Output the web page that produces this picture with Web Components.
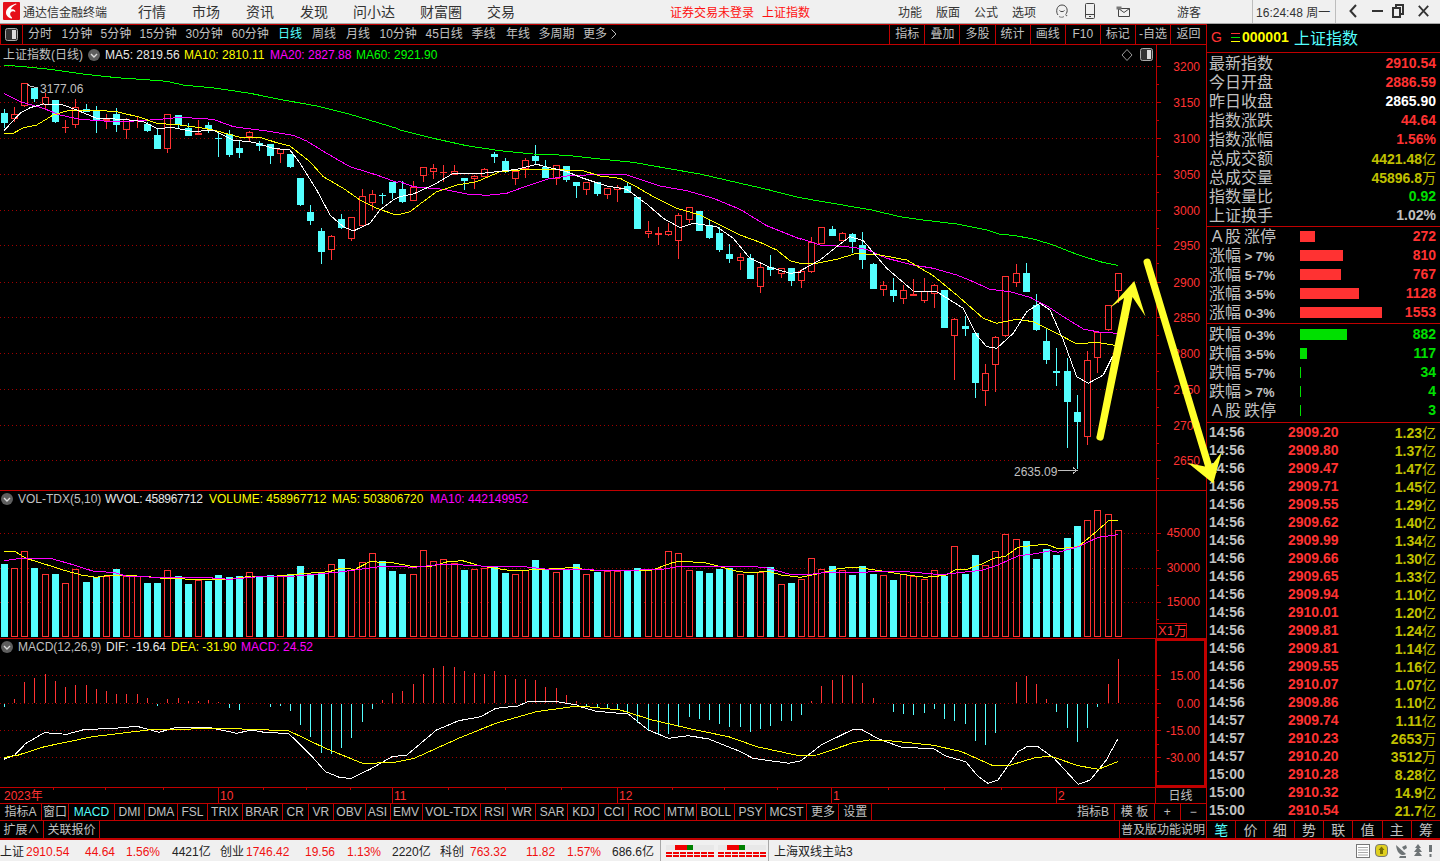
<!DOCTYPE html>
<html lang="zh">
<head>
<meta charset="utf-8">
<title>通达信金融终端</title>
<style>
  html,body{margin:0;padding:0;background:#000;height:861px;overflow:hidden;}
  body{display:flex;flex-direction:column;position:relative;width:1440px;
    font:12px "Liberation Sans","Noto Sans CJK SC",sans-serif;}
</style>
</head>
<body>
<tdx-titlebar></tdx-titlebar>
<tdx-workspace>
  <tdx-periodbar></tdx-periodbar>
  <tdx-kline></tdx-kline>
  <tdx-volume></tdx-volume>
  <tdx-macd></tdx-macd>
  <tdx-timeaxis></tdx-timeaxis>
  <tdx-indicatorbar></tdx-indicatorbar>
  <tdx-quote slot="side"></tdx-quote>
</tdx-workspace>
<tdx-statusbar></tdx-statusbar>
<tdx-arrows></tdx-arrows>

<script>
/* ---------- palette + chart data (page px, read off the reference) ---------- */
const RED = '#ff3232', CYAN = '#54ffff', GRID = '#a00000', LINE = '#c00000', GREY = '#c0c0c0';
const FONT = '"Liberation Sans","Noto Sans CJK SC",sans-serif';

// candle rows: type(r/c), bodyTop, bodyBottom, wickTop, wickBottom, in zoom units (3x) from an origin y
const group = (oy, rows) => rows.map(([t, a, b, c, d]) => ({ t, top: oy + a / 3, bot: oy + b / 3, hi: oy + c / 3, lo: oy + d / 3 }));
const CANDLES = [
  ...group(60, [['c',158,188,147,203],['r',163,178,142,185],['r',70,137,68,140],['c',84,116,84,125],['r',110,134,100,150],
    ['c',120,186,120,190],['r',200,203,180,220],['r',142,194,117,204],['c',148,155,132,157],['c',152,180,138,218],
    ['r',178,184,162,207],['c',162,194,145,215],['r',178,211,175,236],['r',181,184,168,203],['c',191,212,185,215],
    ['c',225,266,205,266],['r',163,266,163,278],['c',166,196,166,204],['c',204,227,190,227],['r',218,226,180,226],
    ['c',196,207,186,218],['c',235,238,215,290],['c',222,285,210,290],['c',264,278,243,293],['r',217,231,213,246],
    ['c',250,257,243,272],['c',252,287,252,311],['r',268,283,268,309],['c',282,320,282,323],['c',354,434,354,437],
    ['c',456,483,435,494],['c',513,575,504,611],['r',529,569,526,599],['c',477,503,462,507],['r',472,536,472,542],
    ['r',409,497,388,500],['r',403,428,390,450],['c',404,406,399,432],['c',366,398,366,418]]),
  ...group(130, [['c',177,216,153,218],['r',171,212,153,212],['r',112,137,112,155],['r',115,125,102,147],['r',127,130,105,155],
    ['r',124,136,105,136],['c',144,152,144,179],['r',139,146,135,177],['r',118,140,115,140],['c',72,80,67,99],
    ['c',93,127,85,130],['r',122,146,122,165],['r',91,116,85,144],['c',78,93,45,103],['c',110,143,90,143],
    ['r',106,147,106,165],['c',108,150,108,156],['c',156,168,156,204],['r',157,179,157,195],['c',155,192,155,198],
    ['r',175,194,175,207],['r',170,181,166,216],['c',167,189,155,189],['c',201,297,201,297],['r',304,311,273,324],
    ['r',310,314,292,345],['r',304,314,280,318],['r',256,332,250,387],['r',232,269,232,280],['c',243,302,243,302],
    ['c',284,324,270,327],['c',309,360,292,366],['c',372,387,343,399],['r',381,392,369,420],['c',385,446,372,446],
    ['r',411,470,402,489],['c',411,419,375,438],['r',413,431,413,444],['c',414,453,414,468]]),
  ...group(210, [['r',182,212,178,233],['r',95,185,82,190],['r',52,103,52,103],['c',58,78,48,78],['r',68,92,65,92],
    ['c',73,96,70,130],['c',105,150,67,177],['c',162,237,160,237],['r',226,241,213,258],['c',240,258,205,275],
    ['r',241,268,225,281],['r',251,257,207,257],['r',242,272,205,278],['r',226,253,223,293],['c',240,353,240,353],
    ['r',328,379,325,510],['c',348,356,318,378],['c',369,518,369,563],['r',490,542,462,587],['r',382,466,378,545],
    ['r',199,377,199,380],['r',190,218,162,230],['c',189,245,159,245],['c',285,360,252,362],['c',393,449,355,461],
    ['c',484,488,414,527],['c',484,575,445,713],['c',606,635,555,778],['r',451,682,424,705],['r',365,445,365,489],
    ['r',286,359,286,364],['r',190,242,190,280]])
];
const barX = (i) => Math.floor(4.33 + i * 10.22);

// volume bar tops and macd bar tips, zoom units from y=490
const VOL_TOPS = [222,235,184,234,253,252,280,238,276,262,257,237,259,258,279,279,241,258,282,270,273,255,261,258,247,262,256,258,252,228,
  252,252,223,207,240,217,190,214,243,252,253,181,214,208,220,240,238,235,231,249,253,240,210,236,247,238,222,
  253,246,244,242,240,234,236,235,184,190,241,243,249,237,234,253,255,247,231,281,279,268,205,238,228,241,255,228,252,256,270,253,259,268,241,258,169,
  252,195,226,184,133,148,153,207,177,195,144,108,91,61,72,121];
const MACD_TIPS = [648,627,576,564,552,573,591,585,585,597,603,612,612,612,624,644,627,624,633,633,630,636,651,657,640,640,648,645,660,702,738,786,789,771,741,693,654,
  630,609,603,582,552,534,528,531,543,549,552,543,556,567,567,570,591,594,615,633,
  648,652,654,657,663,696,718,729,729,706,678,684,687,699,708,708,723,714,705,690,690,672,633,588,570,555,556,579,624,640,663,669,672,666,654,684,690,699,750,762,726,640,
  576,558,582,627,663,711,753,711,648,582,507];

// polylines stitched from the crops: [origin x, origin y, x scale, flat points]
const poly = (...parts) => parts.flatMap(([ox, oy, sx, p]) => {
  const out = [];
  for (let i = 0; i < p.length; i += 2) out.push((ox + p[i] / sx).toFixed(1) + ',' + (oy + p[i + 1] / 3).toFixed(1));
  return out;
}).join(' ');
const SX9 = 1568 / 580, SX10 = 1568 / 630;

const MA60 = poly([0,60,3,[12,16,60,19,150,28,250,42,350,53,450,60,500,64,550,75,650,85,750,100,850,120,950,138,1050,163,1190,205]],
  [400,130,3,[0,0,20,5,100,25,200,47,300,62,400,72,500,76,600,87,700,97,800,115,900,132,1000,155,1100,178,1200,203]],
  [800,210,3,[215,0,300,20,370,30,470,42,560,60,600,73,640,76,700,87,760,105,830,133,900,155,953,166]]);
const MA20 = poly([0,60,3,[12,100,60,125,130,145,180,165,240,178,300,182,350,186,420,182,480,178,540,172,640,178,700,200,800,213,880,226,920,243,980,280,1050,320,1130,345,1190,367]],
  [400,130,3,[0,155,40,170,130,178,200,192,260,196,320,190,380,168,440,148,500,138,600,133,680,135,780,168,860,182,940,205,1020,238,1100,287,1200,327]],
  [800,210,3,[0,85,60,105,140,110,200,118,260,145,340,165,400,175,470,195,520,215,570,238,630,245,690,262,740,287,790,320,850,357,900,367,955,370]]);
const MA10 = poly([0,60,3,[12,220,40,220,70,203,110,195,160,165,210,150,280,150,350,155,420,172,470,190,540,195,600,203,640,210,720,232,780,232,830,248,870,258,930,305,970,350,1030,385,1080,420,1130,445,1180,462,1195,463]],
  [400,130,3,[0,253,30,245,60,222,110,185,170,165,230,155,300,125,360,120,440,118,550,122,600,138,660,145,700,165,760,200,830,235,900,255,960,285,1020,315,1080,337,1130,360,1170,392,1200,400]],
  [800,210,3,[0,162,50,160,110,148,170,130,240,135,320,150,400,197,470,255,550,325,590,340,650,328,700,335,780,375,830,402,890,397,950,407]]);
const MA5 = poly([0,60,3,[12,212,60,160,90,143,130,132,190,135,230,150,290,175,370,178,430,185,470,205,520,203,580,215,640,210,700,240,760,247,820,265,870,270,900,310,950,390,990,465,1030,500,1060,513,1110,490,1140,450,1180,420,1195,412]],
  [400,130,3,[0,200,40,192,100,165,160,130,230,132,290,125,350,118,410,103,450,113,500,125,550,145,620,168,680,178,740,222,790,265,840,293,880,280,950,290,1000,325,1050,385,1110,412,1170,430,1200,427]],
  [800,210,3,[0,183,60,150,110,110,150,80,190,92,260,175,340,243,410,245,490,295,530,375,560,410,590,415,640,370,680,305,720,280,750,300,790,390,830,500,865,520,910,495,950,415]]);

const VOL_MA5 = poly([0,490,SX9,[10,184,40,184,70,205,120,222,170,240,220,255,260,262,300,255,330,255,400,260,440,265,500,267,560,267,620,268,680,258,750,258,830,250,890,245,920,235,960,238,1000,215,1060,218,1120,230,1170,228,1210,215,1250,212,1300,228,1370,240,1430,240,1470,238,1560,232]],
  [580,490,SX10,[0,236,30,241,100,240,180,240,230,218,250,214,310,218,340,227,390,244,420,248,470,244,500,255,550,262,590,252,640,237,680,231,740,241,800,253,860,262,910,256,935,239,965,237,1000,222,1030,205,1060,198,1090,172,1130,166,1160,163,1190,176,1240,170,1280,130,1315,93,1338,92]]);
const VOL_MA10 = poly([0,490,SX9,[10,212,50,206,140,206,200,225,250,243,310,248,340,258,420,262,550,262,620,268,700,260,800,258,900,248,960,240,1040,228,1120,232,1200,222,1300,228,1400,228,1480,238,1560,238]],
  [580,490,SX10,[0,238,50,241,130,241,210,237,250,229,400,229,460,232,520,252,560,255,600,249,800,244,900,254,950,247,1000,241,1040,225,1090,198,1140,190,1170,182,1190,187,1240,170,1290,142,1338,134]]);

const DIF = poly([0,490,SX9,[10,808,40,795,70,760,120,728,180,733,230,718,300,716,370,709,430,727,470,714,560,711,640,730,680,720,720,728,780,730,840,795,880,845,920,863,950,865,1000,838,1060,800,1100,795,1180,720,1240,692,1300,680,1340,655,1400,648,1430,634,1500,634,1560,645]],
  [580,490,SX10,[0,650,40,664,120,672,170,720,220,745,270,737,320,747,400,785,430,805,520,820,550,812,600,765,680,718,700,718,740,745,800,772,880,776,910,798,960,815,990,858,1015,880,1040,870,1090,785,1115,768,1140,770,1180,805,1240,883,1270,870,1310,810,1338,748]]);
const DEA = poly([0,490,SX9,[10,803,50,795,120,770,250,740,400,720,600,715,780,722,880,775,980,820,1060,818,1120,805,1240,745,1340,700,1450,665,1560,648]],
  [580,490,SX10,[0,648,100,660,180,690,280,718,370,740,440,770,540,796,590,795,680,758,720,750,770,752,880,766,950,785,1030,828,1070,826,1130,804,1170,798,1240,827,1290,838,1338,815]]);

/* ---------- svg bits ---------- */
const dotted = (y) => `<line x1="0" x2="1156" y1="${y + .5}" y2="${y + .5}" stroke="${GRID}" stroke-dasharray="1 3"/>`;
const rect = (x, y, w, h, fill) => `<rect x="${x}" y="${y}" width="${w}" height="${h}" fill="${fill}"/>`;
const outline = (x, y, w, h, c) => `<rect x="${x + .5}" y="${y + .5}" width="${w - 1}" height="${h - 1}" fill="#000" stroke="${c}"/>`;
const line = (pts, c) => `<polyline points="${pts}" fill="none" stroke="${c}"/>`;
const tick = (y, long) => rect(1156, y, long ? 5 : 3, 1, LINE);
const axisLabel = (y, s, off = 5) => `<text x="1200" y="${y + off}" text-anchor="end" fill="${RED}" font-size="12">${s}</text>`;
const chevron = `<svg width="12" height="12" viewBox="0 0 12 12"><circle cx="6" cy="6" r="6" fill="#5e5e5e"/><path d="M3 5l3 3 3-3" fill="none" stroke="#ddd" stroke-width="1.4"/></svg>`;
const panelIcon = `<svg width="13" height="13" viewBox="0 0 13 13"><rect x=".5" y=".5" width="12" height="12" rx="2" fill="#333" stroke="#aaa"/><rect x="7" y="2" width="4" height="9" fill="#ddd"/></svg>`;

const PANE_CSS = `
  :host{display:block;position:relative;border-bottom:1px solid ${LINE};box-sizing:content-box;}
  svg.chart{display:block;shape-rendering:crispEdges;font-family:${FONT};}
  .legend{position:absolute;left:0;top:2px;display:flex;align-items:center;white-space:nowrap;
    font:12px/16px ${FONT};color:${GREY};}
  .legend svg{display:block;}
  .w{color:#e8e8e8}.y{color:#ffff00}.m{color:#ff00ff}.g{color:#00ff00}
`;

/* ---------- base ---------- */
class TdxElement extends HTMLElement {
  constructor() {
    super();
    this.attachShadow({ mode: 'open' }).innerHTML = this.render();
  }
}

class TdxTitlebar extends TdxElement {
  render() {
    const nav = ['行情','市场','资讯','发现','问小达','财富圈','交易'];
    const tools = ['功能','版面','公式','选项'];
    return `<style>
      :host{display:flex;align-items:center;height:22px;padding-bottom:1px;background:#f0f0f0;border-bottom:1px solid #a8a8a8;
        flex:none;color:#333;font:12px ${FONT};white-space:nowrap;}
      .logo{margin-left:3px;display:block;}
      .app{margin-left:3px;width:115px;}
      nav{display:flex;gap:26px;font-size:14px;width:375px;padding-bottom:1px;}
      nav span:nth-child(n+5){margin-left:-1px;}
      .red{color:#ff1010;}
      .login{margin-left:157px;}
      .tools{margin-left:88px;display:flex;gap:14px;}
      .ic{display:block;flex:none;}
      .sep{width:1px;height:23px;background:#bdbdbd;flex:none;}
    </style>
    <svg class="logo" width="17" height="18" viewBox="0 0 17 18"><rect width="17" height="18" rx="1" fill="#e5101a"/>
      <path d="M13 1.5C8 3 3.5 6 3 10c-.4 3 2 5.5 5 6.5 1 .3 1.500-.7.800-1.300C7 13.500 6.500 11.500 8 10c1-1 2.500-.8 3.500-.3.700.3 1.200-.3.700-1-1.200-1.300-3-1.700-4.500-1.300C8.500 5.500 10.500 3.500 13.500 2.300z" fill="#fff"/></svg>
    <span class="app">通达信金融终端</span>
    <nav>${nav.map(n => `<span>${n}</span>`).join('')}</nav>
    <span class="red login">证券交易未登录</span>
    <span class="red" style="margin-left:8px">上证指数</span>
    <div class="tools">${tools.map(t => `<span>${t}</span>`).join('')}</div>
    <svg class="ic" style="margin-left:18px" width="16" height="16" viewBox="0 0 16 16" fill="none" stroke="#444"><path d="M4 12C1.500 9 2.500 2 8 2s6.500 7 3.500 9.500"/><path d="M5.500 7.500c1 1.500 4 1.500 5 0"/><path d="M5 13.500c1.500 1 4 1 5 0" stroke="#777"/><circle cx="12.500" cy="12.500" r=".8" fill="#666" stroke="none"/></svg>
    <svg class="ic" style="margin-left:15px" width="10" height="16" viewBox="0 0 10 16" fill="none" stroke="#444"><rect x=".5" y=".5" width="9" height="15" rx="1"/><path d="M1 11.500h8"/><path d="M4 13.500h2"/></svg>
    <svg class="ic" style="margin-left:21px" width="15" height="13" viewBox="0 0 15 13" fill="none" stroke="#444"><path d="M2.500 3.500h11v8h-11z"/><path d="M2.500 3.500l5.500 4 5.500-4"/><path d="M.5 1.500h5v3h-5z" fill="#777" stroke="none"/></svg>
    <span style="margin-left:46px;width:49px">游客</span>
    <span class="sep" style="margin-left:26px"></span>
    <span style="margin-left:3px;width:79px">16:24:48 周一</span>
    <span class="sep"></span>
    <svg class="ic" style="margin-left:13px" width="8" height="14" viewBox="0 0 8 14" fill="none" stroke="#333" stroke-width="2"><path d="M7 1L1.500 7 7 13"/></svg>
    <span style="margin-left:15px;width:11px;height:2px;background:#333"></span>
    <svg class="ic" style="margin-left:9px" width="12" height="14" viewBox="0 0 12 14" fill="none" stroke="#333" stroke-width="2"><path d="M4 3V1h7v9H9"/><rect x="1" y="4" width="7" height="9"/></svg>
    <svg class="ic" style="margin-left:14px" width="11" height="12" viewBox="0 0 11 12" fill="none" stroke="#333" stroke-width="1.800"><path d="M.8 .8l9.400 10.400M10.200 .8L.8 11.200"/></svg>`;
  }
}

class TdxWorkspace extends TdxElement {
  render() {
    return `<style>
      :host{display:flex;flex:none;height:814px;background:#000;}
      .left{width:1206px;flex:none;display:flex;flex-direction:column;border-right:1px solid ${LINE};}
      .right{flex:1;min-width:0;}
    </style>
    <div class="left"><slot></slot></div>
    <div class="right"><slot name="side"></slot></div>`;
  }
}

class TdxPeriodbar extends TdxElement {
  render() {
    const more = `更多<svg style="margin-left:4px;vertical-align:-1px" width="6" height="10" viewBox="0 0 6 10" fill="none" stroke="${GREY}"><path d="M.5 .5L5 5 .5 9.500"/></svg>`;
    const items = [['分时',33.5],['1分钟',39],['5分钟',39],['15分钟',46],['30分钟',46],['60分钟',46.5],['日线',34,'on'],['周线',34],['月线',33.5],
      ['10分钟',46],['45日线',46],['季线',34.5],['年线',32.500],['多周期',44.500],[more,40]];
    const right = ['指标','叠加','多股','统计','画线','F10','标记','-自选','返回'];
    return `<style>
      :host{display:flex;flex:none;height:19px;border-top:1px solid ${LINE};border-bottom:1px solid ${LINE};
        color:${GREY};font:12px/19px ${FONT};white-space:nowrap;}
      .box{flex:none;border-left:1px solid ${LINE};border-right:1px solid ${LINE};display:flex;align-items:center;justify-content:center;width:21px;}
      .list{display:flex;margin-left:5px;}
      .on{color:${CYAN};}
      .tools{display:flex;margin-left:auto;}
      .tools span{width:34.100px;text-align:center;border-left:1px solid ${LINE};}
      .tools span:last-child{width:35px;}
    </style>
    <div class="box">${panelIcon}</div>
    <div class="list">${items.map(i => `<span class="${i[2] || ''}" style="width:${i[1]}px">${i[0]}</span>`).join('')}</div>
    <div class="tools">${right.map(t => `<span>${t}</span>`).join('')}</div>`;
  }
}

class TdxKline extends TdxElement {
  render() {
    const levels = [[3200,66],[3150,102],[3100,138],[3050,174],[3000,210],[2950,245],[2900,282],[2850,317],[2800,353],[2750,389],[2700,425],[2650,460]];
    let s = levels.map(l => dotted(l[1])).join('');
    levels.forEach(l => { s += tick(l[1], 1) + tick(l[1] + 18, 0) + axisLabel(l[1], l[0]); });
    s += rect(1156, 45, 1, 445, LINE);
    CANDLES.forEach((c, i) => {
      const x = barX(i), col = c.t === 'r' ? RED : CYAN;
      const top = Math.round(c.top), bot = Math.max(Math.round(c.bot), top + 1);
      s += rect(x, Math.round(c.hi), 1, Math.round(c.lo) - Math.round(c.hi), col);
      if (bot - top <= 2) s += rect(x - 3, top, 7, bot - top, col);
      else s += c.t === 'r' ? outline(x - 3, top, 7, bot - top, col) : rect(x - 3, top, 7, bot - top, col);
    });
    s += line(MA60, '#00ff00') + line(MA20, '#ff00ff') + line(MA10, '#ffff00') + line(MA5, '#ffffff');
    s += `<text x="40" y="93" fill="${GREY}" font-size="12">3177.06</text><polyline points="27,84 30,86 38,88" fill="none" stroke="${GREY}"/>`;
    s += `<text x="1014" y="476" fill="${GREY}" font-size="12">2635.09</text><path d="M1058 470.500h19M1073 467.500l4 3-4 3" fill="none" stroke="${GREY}"/>`;
    return `<style>${PANE_CSS}:host{height:445px;flex:none;}
      .tools{position:absolute;top:3px;left:1121px;display:flex;gap:7px;align-items:center;}
    </style>
    <svg class="chart" width="1206" height="445" viewBox="0 45 1206 445">${s}</svg>
    <div class="legend"><span style="margin-left:3px;width:85px">上证指数(日线)</span><span style="width:17px">${chevron}</span>
      <span class="w" style="width:79px">MA5: 2819.56</span><span class="y" style="width:86px">MA10: 2810.11</span><span class="m" style="width:86px">MA20: 2827.88</span><span class="g">MA60: 2921.90</span></div>
    <div class="tools"><svg width="12" height="12" viewBox="0 0 12 12"><path d="M6 .5L11 6 6 11.500 1 6z" fill="none" stroke="#999"/></svg>${panelIcon}</div>`;
  }
}

class TdxVolume extends TdxElement {
  render() {
    const grid = [[45000,533],[30000,568],[15000,602]];
    let s = grid.map(g => dotted(g[1])).join('');
    grid.forEach(g => { s += tick(g[1], 1) + tick(g[1] + 17, 0) + axisLabel(g[1], g[0], 4); });
    s += rect(1156, 491, 1, 147, LINE);
    VOL_TOPS.forEach((z, i) => {
      const x = barX(i), top = Math.round(490 + z / 3), col = CANDLES[i].t === 'r' ? RED : CYAN;
      s += CANDLES[i].t === 'r' ? outline(x - 3, top, 7, 637 - top, col) : rect(x - 3, top, 7, 637 - top, col);
    });
    s += line(VOL_MA5, '#ffff00') + line(VOL_MA10, '#ff00ff');
    s += `<path d="M1156.500 623.500h30v15" fill="none" stroke="${LINE}"/><text x="1158" y="635" fill="${RED}" font-size="13">X1万</text>`;
    return `<style>${PANE_CSS}:host{height:147px;flex:none;}</style>
    <svg class="chart" width="1206" height="147" viewBox="0 491 1206 147">${s}</svg>
    <div class="legend" style="top:0"><span style="width:17px;margin-left:1px">${chevron}</span><span style="width:87px">VOL-TDX(5,10)</span>
      <span class="w" style="width:104px;letter-spacing:-.3px">WVOL: 458967712</span><span class="y" style="width:123px">VOLUME: 458967712</span><span class="y" style="width:98px">MA5: 503806720</span><span class="m">MA10: 442149952</span></div>`;
  }
}

class TdxMacd extends TdxElement {
  render() {
    const grid = [['15.00',675],['0.00',703],['-15.00',730],['-30.00',757]];
    let s = grid.map(g => dotted(g[1])).join('');
    grid.forEach(g => { s += tick(g[1], 1) + tick(g[1] + 14, 0) + axisLabel(g[1], g[0]); });
    MACD_TIPS.forEach((z, i) => {
      if (z === 640) return;
      const y = Math.round(490 + z / 3), x = barX(i);
      s += z < 640 ? rect(x, y, 1, 703 - y, RED) : rect(x, 704, 1, y - 703, CYAN);
    });
    s += line(DIF, '#ffffff') + line(DEA, '#ffff00');
    s += `<rect x="1156" y="640" width="49" height="146" fill="none" stroke="${LINE}" stroke-width="2"/>`;
    return `<style>${PANE_CSS}:host{height:148px;flex:none;}</style>
    <svg class="chart" width="1206" height="148" viewBox="0 639 1206 148">${s}</svg>
    <div class="legend" style="top:0"><span style="width:17px;margin-left:1px">${chevron}</span><span style="width:88px">MACD(12,26,9)</span>
      <span class="w" style="width:65px">DIF: -19.64</span><span class="y" style="width:70px">DEA: -31.90</span><span class="m">MACD: 24.52</span></div>`;
  }
}

class TdxTimeaxis extends TdxElement {
  render() {
    const marks = [[218,'10'],[392,'11'],[617,'12'],[831,'1'],[1056,'2']];
    const weeks = [53,105,163,263,306,350,448,505,561,672,724,777,888,944,1001];
    let s = weeks.map(x => rect(x, 0, 1, 2, LINE)).join('');
    marks.forEach(m => { s += rect(m[0], 0, 1, 15, LINE) + `<text x="${m[0] + 2}" y="12" fill="${RED}" font-size="12">${m[1]}</text>`; });
    s += `<text x="4" y="12" fill="${RED}" font-size="12">2023年</text>`;
    s += rect(1155, 0, 1, 15, LINE) + `<text x="1180.500" y="12" text-anchor="middle" fill="${GREY}" font-size="12">日线</text>`;
    return `<style>:host{display:block;height:15px;flex:none;border-bottom:1px solid ${LINE};}
      svg{display:block;shape-rendering:crispEdges;font-family:${FONT};}</style>
    <svg width="1206" height="15" viewBox="0 0 1206 15">${s}</svg>`;
  }
}

class TdxIndicatorbar extends TdxElement {
  render() {
    const left = [['指标A',42],['窗口',27],['MACD',46,'on'],['DMI',30],['DMA',33],['FSL',30],['TRIX',34.500],['BRAR',40],['CR',26.500],['VR',24.500],['OBV',32],['ASI',25],
      ['EMV',32],['VOL-TDX',58.700],['RSI',27.300],['WR',28],['SAR',32],['KDJ',31],['CCI',30],['ROC',36],['MTM',31.500],['BOLL',38.500],['PSY',31],['MCST',41],['更多',32],['设置',32.500]];
    const right = [['指标B',43.200],['模 板',40],['+',25.500],['−',25.500]];
    const cell = (i) => `<span class="${i[2] || ''}" style="width:${i[1]}px">${i[0]}</span>`;
    return `<style>
      :host{display:block;flex:none;color:${GREY};font:12px ${FONT};white-space:nowrap;}
      .row{display:flex;border-bottom:1px solid ${LINE};box-sizing:border-box;}
      .r1{height:17px;line-height:16px;}
      .r2{height:17px;line-height:18px;border-bottom:0;}
      span{display:block;text-align:center;border-right:1px solid ${LINE};box-sizing:border-box;flex:none;}
      .on{color:${CYAN};}
      .end{margin-left:auto;display:flex;}
      .end span:last-child{border-right:0;}
      .r2 span{height:17px;}
    </style>
    <div class="row r1">${left.map(cell).join('')}<div class="end">${right.map(cell).join('')}</div></div>
    <div class="row r2"><span style="width:44px">扩展∧</span><span style="width:56px">关联报价</span><div class="end"><span style="width:87px;border-left:1px solid ${LINE};border-right:0">普及版功能说明</span></div></div>`;
  }
}

class TdxQuote extends TdxElement {
  render() {
    const info = [['最新指数','2910.54','r'],['今日开盘','2886.59','r'],['昨日收盘','2865.90','w'],['指数涨跌','44.64','r'],['指数涨幅','1.56%','r'],
      ['总成交额','4421.48','o','亿'],['总成交量','45896.8','o','万'],['指数量比','0.92','g'],['上证换手','1.02%','e']];
    const A = '<span style="display:inline-block;width:16px;text-align:center">A</span>';
    const up = [[A + '股<span style="margin-left:3px">涨停</span>','',15,'272'],['涨幅',' &gt; 7%',43,'810'],['涨幅',' 5-7%',41,'767'],['涨幅',' 3-5%',59,'1128'],['涨幅',' 0-3%',82,'1553']];
    const down = [['跌幅',' 0-3%',47,'882'],['跌幅',' 3-5%',7,'117'],['跌幅',' 5-7%',1,'34'],['跌幅',' &gt; 7%',1,'4'],[A + '股<span style="margin-left:3px">跌停</span>','',1,'3']];
    const ticks = [['14:56','2909.20','1.23','亿'],['14:56','2909.80','1.37','亿'],['14:56','2909.47','1.47','亿'],['14:56','2909.71','1.45','亿'],['14:56','2909.55','1.29','亿'],
      ['14:56','2909.62','1.40','亿'],['14:56','2909.99','1.34','亿'],['14:56','2909.66','1.30','亿'],['14:56','2909.65','1.33','亿'],['14:56','2909.94','1.10','亿'],
      ['14:56','2910.01','1.20','亿'],['14:56','2909.81','1.24','亿'],['14:56','2909.81','1.14','亿'],['14:56','2909.55','1.16','亿'],['14:56','2910.07','1.07','亿'],
      ['14:56','2909.86','1.10','亿'],['14:57','2909.74','1.11','亿'],['14:57','2910.23','2653','万'],['14:57','2910.20','3512','万'],['15:00','2910.28','8.28','亿'],
      ['15:00','2910.32','14.9','亿'],['15:00','2910.54','21.7','亿']];
    const tabs = ['笔','价','细','势','联','值','主','筹'];
    const breadth = (r, cls) => `<div class="row"><span class="lab">${r[0]}<b>${r[1]}</b></span><span class="bar"><i class="${cls}" style="width:${r[2]}px"></i></span><span class="val ${cls}">${r[3]}</span></div>`;
    return `<style>
      :host{display:flex;flex-direction:column;height:814px;color:${GREY};font:14px ${FONT};white-space:nowrap;}
      .head{height:26px;padding-bottom:2px;flex:none;border-bottom:1px solid ${LINE};display:flex;align-items:center;}
      .head .g{color:${RED};font-size:14px;margin-left:4px;width:20px;}
      .head .tri{width:9px;height:9px;margin-right:2px;background:linear-gradient(#ff3232 0 1px,#000 1px 4px,#00e000 4px 5px,#000 5px 8px,#ffff00 8px 9px);}
      .head .code{color:#ffff00;font-weight:700;font-size:14px;width:52px;}
      .head .nm{color:${CYAN};font-size:16px;}
      .block{flex:none;border-bottom:1px solid ${LINE};box-sizing:border-box;}
      .b1{height:174px;padding-top:1px;}.b2{height:97px;}.b3{height:99px;padding-top:1px;}
      .row{display:flex;align-items:center;height:19px;padding:0 4px 0 2px;}
      .lab{font-size:16px;line-height:19px;width:91px;flex:none;}
      .lab b{font-size:13px;font-weight:700;}
      .bar{flex:1;display:flex;align-items:center;}
      .bar i{display:block;height:11px;}
      .val{margin-left:auto;font-weight:700;padding-bottom:2px;}
      .val small{font-size:14px;font-weight:400;}
      .r{color:${RED}}i.r{background:${RED}}
      .w{color:#fff}.o{color:#c0c000}.e{color:${GREY}}
      .g2{color:#00e000}i.g2{background:#00e000}
      .ticks{height:398px;flex:none;border-bottom:1px solid ${LINE};box-sizing:border-box;}
      .tick{display:flex;align-items:center;height:18px;padding:0 4px 0 2px;font-weight:700;}
      .tick .t{width:79px;flex:none;}
      .tick .p{color:${RED};}
      .tick .v{margin-left:auto;color:#c0c000;}
      .tick .v small{font-size:14px;font-weight:400;}
      .tabs{flex:1;display:flex;}
      .tabs span{flex:1;text-align:center;font-size:14px;line-height:18px;height:17px;border-left:1px solid ${LINE};}
      .tabs span:first-child{color:${CYAN};border-left:0;}
    </style>
    <div class="head"><span class="g">G</span><span class="tri"></span><span class="code">000001</span><span class="nm">上证指数</span></div>
    <div class="block b1">${info.map(r => `<div class="row"><span class="lab">${r[0]}</span><span class="val ${r[2] === 'g' ? 'g2' : r[2]}">${r[1]}${r[3] ? `<small>${r[3]}</small>` : ''}</span></div>`).join('')}</div>
    <div class="block b2">${up.map(r => breadth(r, 'r')).join('')}</div>
    <div class="block b3">${down.map(r => breadth(r, 'g2')).join('')}</div>
    <div class="ticks">${ticks.map(r => `<div class="tick"><span class="t">${r[0]}</span><span class="p">${r[1]}</span><span class="v">${r[2]}<small>${r[3]}</small></span></div>`).join('')}</div>
    <div class="tabs">${tabs.map(t => `<span>${t}</span>`).join('')}</div>`;
  }
}

class TdxStatusbar extends TdxElement {
  render() {
    const cells = [['上证',0,24,'k'],['2910.54',26,45,'r'],['44.64',85,31,'r'],['1.56%',126,35,'r'],['4421亿',172,40,'k'],
      ['创业',220,24,'k'],['1746.42',246,45,'r'],['19.56',305,31,'r'],['1.13%',347,34,'r'],['2220亿',392,40,'k'],
      ['科创',440,24,'k'],['763.32',470,38,'r'],['11.82',526,29,'r'],['1.57%',567,34,'r'],['686.6亿',612,44,'k']];
    let cur = 0, html = '';
    cells.forEach(c => { html += `<span class="tx ${c[3]}" style="margin-left:${c[1] - cur}px;width:${c[2]}px">${c[0]}</span>`; cur = c[1] + c[2]; });
    const meter = (a, b) => {
      let s = '<svg width="48" height="12" viewBox="0 0 48 12" shape-rendering="crispEdges">' + rect(0, 0, 48, 5, '#e8e8e8') + rect(a, 0, b, 5, '#f00000') + rect(a + b, 0, 6, 5, '#008000');
      for (let i = 0; i < 7; i++) s += rect(i * 7, 7, 6, 2, '#f00000') + rect(i * 7, 10, 6, 2, '#f00000');
      return s + '</svg>';
    };
    return `<style>
      :host{display:flex;align-items:center;flex:none;height:21px;background:#f0f0f0;border-top:2px solid ${LINE};
        font:12px ${FONT};color:#222;white-space:nowrap;}
      span{flex:none;display:block;}
      .tx{padding-top:4px;line-height:17px;}
      .r{color:#f01010;}
      .sep{width:1px;height:21px;background:#a8a8a8;flex:none;}
      .meters{display:flex;gap:4px;margin:0 2px 0 5px;}
      .meters svg{display:block;}
      .ico{display:flex;align-items:center;margin-left:auto;margin-right:8px;}
      .ico svg{display:block;}
    </style>
    ${html}
    <span class="sep" style="margin-left:4px"></span>
    <div class="meters">${meter(9, 12)}${meter(9, 12)}</div>
    <span class="sep"></span>
    <span class="tx" style="margin-left:5px">上海双线主站3</span>
    <div class="ico">
      <svg width="14" height="14" viewBox="0 0 14 14" fill="#fff" stroke="#777"><rect x=".5" y=".5" width="13" height="13"/><path d="M2 3.500h10M2 6h10M2 8.500h10M2 11h10" stroke="#aaa"/></svg>
      <svg style="margin-left:5px" width="13" height="13" viewBox="0 0 13 13"><rect x=".5" y=".5" width="12" height="12" rx="3.500" fill="#e0d020" stroke="#777"/><path d="M6.500 2.500l3 3.500H8V10H5V6H3.500z" fill="#7a7000"/></svg>
      <svg style="margin-left:8px" width="11" height="14" viewBox="0 0 11 14" fill="#6e7476"><path d="M0 1l10 9c-3 2.500-9 1-10-9z"/><path d="M6 3l4-2 1 3-3 2zM4 12h6v2H3z"/></svg>
      <svg style="margin-left:7px" width="8" height="14" viewBox="0 0 8 14" fill="#6e7476"><path d="M4 0l3 4H5l3 4H5l3 4H0l3-4H0l3-4H1z"/></svg>
      <svg style="margin-left:7px" width="3" height="12" viewBox="0 0 3 12" fill="#6e7476"><rect width="3" height="7"/><rect x=".5" y="9" width="2" height="3"/></svg>
    </div>`;
  }
}

// the two hand-drawn yellow arrows lie over the chart and the quote panel
class TdxArrows extends TdxElement {
  render() {
    return `<style>:host{position:absolute;left:0;top:0;pointer-events:none;}svg{display:block;}</style>
    <svg width="1440" height="861" viewBox="0 0 1440 861">
      <g fill="#ffff2a">
        <path d="M1096.800 435.500L1124 298 1110 307.700 1134.300 281 1145.500 316.500 1132.500 297 1103.500 438.500A3.500 3.500 0 0 1 1096.800 435.500z"/>
        <path d="M1143.800 263.500A3.500 3.500 0 0 1 1150.600 261L1212 465 1221.700 452 1213.300 483.500 1188 463 1205 466.500z"/>
      </g>
    </svg>`;
  }
}

customElements.define('tdx-titlebar', TdxTitlebar);
customElements.define('tdx-workspace', TdxWorkspace);
customElements.define('tdx-periodbar', TdxPeriodbar);
customElements.define('tdx-kline', TdxKline);
customElements.define('tdx-volume', TdxVolume);
customElements.define('tdx-macd', TdxMacd);
customElements.define('tdx-timeaxis', TdxTimeaxis);
customElements.define('tdx-indicatorbar', TdxIndicatorbar);
customElements.define('tdx-quote', TdxQuote);
customElements.define('tdx-statusbar', TdxStatusbar);
customElements.define('tdx-arrows', TdxArrows);
</script>
</body>
</html>
